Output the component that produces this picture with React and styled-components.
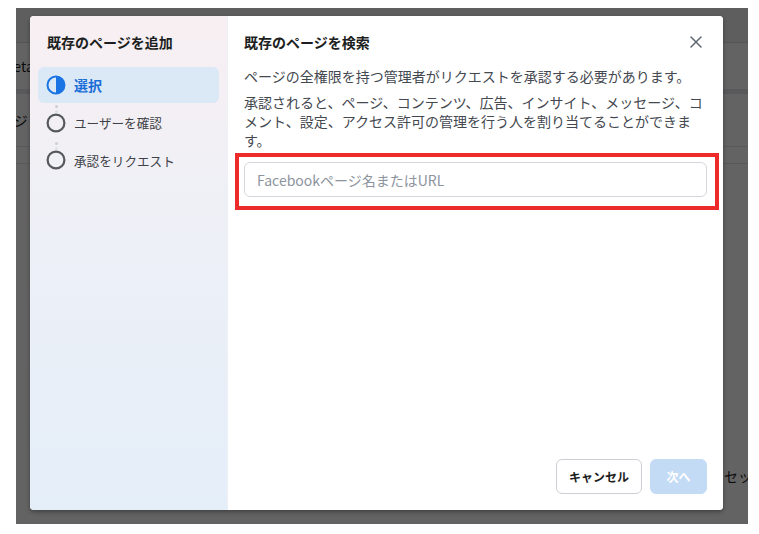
import React from "react"
import styled, { createGlobalStyle } from "styled-components"

const GlobalStyle = createGlobalStyle`
  html, body {
    margin: 0;
    background: #fff;
    font-family: "Noto Sans CJK JP", "Noto Sans", sans-serif;
    -webkit-font-smoothing: antialiased;
  }
`

const Frame = styled.div`
  position: relative;
  margin: 8px 0 0 16px;
  width: 732px;
  height: 516px;
  overflow: hidden;
  background: #fff;
`

/* page behind the dialog */
const BgPage = styled.div`
  display: flex;
  flex-direction: column;
  height: 100%;
  color: #1c1e21;
  font-size: 14px;
`

const BgHeader = styled.div`
  height: 34px;
  background: #f2f3f5;
  border-bottom: 1px solid #dadde1;
  flex: none;
`

const BgRow = styled.div`
  display: flex;
  align-items: center;
  height: ${p => p.h}px;
  border-bottom: ${p => p.line || 1}px solid #e4e6eb;
  flex: none;
`

const BgText = styled.span`
  margin-left: ${p => p.shift}px;
  white-space: nowrap;
`

const BgFooter = styled.div`
  margin-top: auto;
  margin-bottom: 38px;
  padding-left: 708px;
  white-space: nowrap;
`

const Overlay = styled.div`
  position: absolute;
  inset: 0;
  display: flex;
  padding: 8px 25px 14px 14px;
  background: rgba(0, 0, 0, 0.61);
`

const Modal = styled.div`
  flex: 1;
  display: grid;
  grid-template-columns: 198px 1fr;
  border-radius: 4px;
  overflow: hidden;
  background: #fff;
  box-shadow: 0 2px 4px rgba(0, 0, 0, 0.35);
`

const Sidebar = styled.aside`
  padding: 16px 8px;
  background: linear-gradient(180deg, #f8eff2 0%, #eff0f6 35%, #e4eef9 100%);
  border-right: 1px solid #edf1f6;
`

const SideTitle = styled.h2`
  margin: 0;
  padding: 0 9px;
  font-size: 14px;
  line-height: 20px;
  font-weight: 700;
  color: #1c1e21;
`

const Steps = styled.div`
  display: flex;
  flex-direction: column;
  gap: 1.5px;
  margin-top: 15px;
`

const Step = styled.div`
  position: relative;
  display: flex;
  align-items: center;
  gap: 8px;
  height: 36px;
  padding: 0 8px;
  border-radius: 6px;
  background: ${p => (p.active ? "#dbe8f5" : "transparent")};
  color: ${p => (p.active ? "#1a6ed8" : "#3e4147")};
  font-size: ${p => (p.active ? "14px" : "12.6px")};
  font-weight: ${p => (p.active ? 700 : 400)};

  ${p =>
    p.linked &&
    `
    &::before {
      content: "";
      position: absolute;
      left: 16.5px;
      top: 0;
      width: 3px;
      height: 3px;
      border-radius: 50%;
      background: #ccd0d5;
      box-shadow: 0 5px 0 #dfe1e5;
    }
  `}
`

const StepIcon = ({ active }) =>
  active ? (
    <svg width="20" height="20" viewBox="0 0 20 20">
      <circle cx="10" cy="10" r="8.5" fill="none" stroke="#1b74e4" strokeWidth="2" />
      <path d="M10 1.5 A8.5 8.5 0 0 1 10 18.5 Z" fill="#1b74e4" />
    </svg>
  ) : (
    <svg width="20" height="20" viewBox="0 0 20 20">
      <circle cx="10" cy="10" r="8.4" fill="none" stroke="#55585d" strokeWidth="2.2" />
    </svg>
  )

const Main = styled.section`
  display: flex;
  flex-direction: column;
  padding: 16px;
  background: #fff;
`

const Head = styled.div`
  display: flex;
  align-items: center;
  justify-content: space-between;
  height: 20px;
`

const Title = styled.h1`
  margin: 0;
  font-size: 14px;
  line-height: 20px;
  font-weight: 700;
  color: #1c1e21;
`

const CloseButton = styled.button`
  display: flex;
  align-items: center;
  justify-content: center;
  width: 24px;
  height: 24px;
  margin-right: -1px;
  padding: 0;
  border: 0;
  background: none;
  cursor: pointer;
`

const Text = styled.p`
  margin: ${p => p.top}px 0 0;
  font-size: 14px;
  line-height: 19px;
  color: #44484f;
`

const Field = styled.div`
  position: relative;
  margin-top: 12px;
`

const Input = styled.input`
  box-sizing: border-box;
  width: 100%;
  height: 35px;
  padding: 0 12px;
  border: 1px solid #d3d6db;
  border-radius: 6px;
  font: 400 14px "Noto Sans CJK JP", "Noto Sans", sans-serif;
  color: #1c1e21;
  outline: none;

  &::placeholder {
    color: #8d949e;
  }
`

const Highlight = styled.div`
  position: absolute;
  top: -9px;
  right: -12px;
  bottom: -13px;
  left: -9px;
  border: 4px solid #ee2b2b;
  pointer-events: none;
`

const Footer = styled.div`
  display: flex;
  justify-content: flex-end;
  gap: 8px;
  margin-top: auto;
`

const Button = styled.button`
  height: 35px;
  min-width: ${p => (p.primary ? "57px" : "auto")};
  padding: 0 12px;
  border: 1px solid ${p => (p.primary ? "#c3dbf5" : "#ccd0d5")};
  border-radius: 6px;
  background: ${p => (p.primary ? "#c3dbf5" : "#fff")};
  color: ${p => (p.primary ? "#fff" : "#1c1e21")};
  font: 700 12px "Noto Sans CJK JP", "Noto Sans", sans-serif;
  cursor: ${p => (p.disabled ? "default" : "pointer")};
`

const steps = ["選択", "ユーザーを確認", "承認をリクエスト"]

const App = () => (
  <>
    <GlobalStyle />
    <Frame>
      <BgPage>
        <BgHeader />
        <BgRow h={46} line={5}>
          <BgText shift={-14}>Meta</BgText>
        </BgRow>
        <BgRow h={52}>
          <BgText shift={-30}>ページ</BgText>
        </BgRow>
        <BgRow h={16} />
        <BgFooter>セッション</BgFooter>
      </BgPage>

      <Overlay>
        <Modal>
          <Sidebar>
            <SideTitle>既存のページを追加</SideTitle>
            <Steps>
              {steps.map((s, i) => (
                <Step key={s} active={i === 0} linked={i > 0}>
                  <StepIcon active={i === 0} />
                  <span>{s}</span>
                </Step>
              ))}
            </Steps>
          </Sidebar>

          <Main>
            <Head>
              <Title>既存のページを検索</Title>
              <CloseButton aria-label="閉じる">
                <svg width="12" height="12" viewBox="0 0 12 12">
                  <path d="M1 1 L11 11 M11 1 L1 11" stroke="#606770" strokeWidth="1.5" strokeLinecap="round" />
                </svg>
              </CloseButton>
            </Head>
            <Text top={15}>
              ページの全権限を持つ管理者がリクエストを承認する必要があります。
            </Text>
            <Text top={7}>
              承認されると、ページ、コンテンツ、広告、インサイト、メッセージ、コメント、設定、アクセス許可の管理を行う人を割り当てることができます。
            </Text>
            <Field>
              <Input placeholder="Facebookページ名またはURL" />
              <Highlight />
            </Field>
            <Footer>
              <Button>キャンセル</Button>
              <Button primary disabled>
                次へ
              </Button>
            </Footer>
          </Main>
        </Modal>
      </Overlay>
    </Frame>
  </>
)

export default App
